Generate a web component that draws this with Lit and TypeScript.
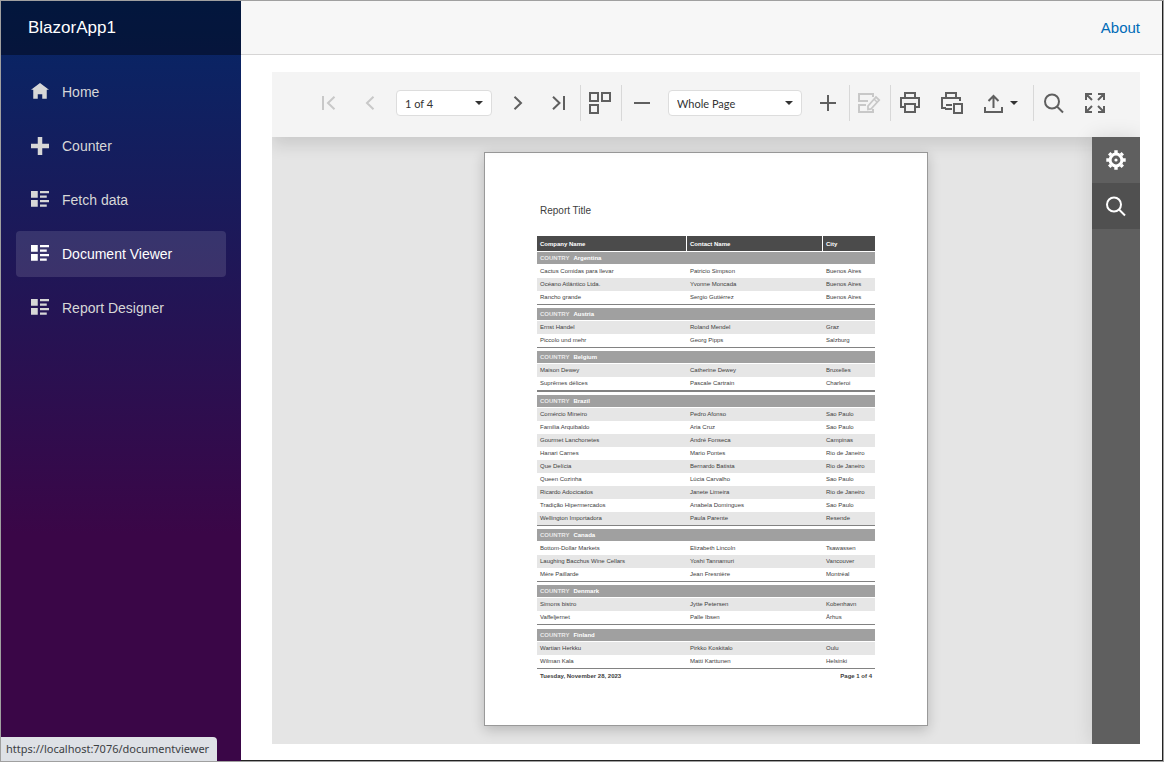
import { LitElement, html, svg, css } from "lit";
import { customElement, state } from "lit/decorators.js";

type Row = [string, string, string];
interface Group {
  country: string;
  shaded: boolean;
  end?: string;
  rows: Row[];
}

// `shaded` tells whether the first row of the group carries the band colour.
const GROUPS: Group[] = [
  {
    country: "Argentina",
    shaded: false,
    rows: [
      ["Cactus Comidas para llevar", "Patricio Simpson", "Buenos Aires"],
      ["Océano Atlántico Ltda.", "Yvonne Moncada", "Buenos Aires"],
      ["Rancho grande", "Sergio Gutiérrez", "Buenos Aires"],
    ],
  },
  {
    country: "Austria",
    shaded: true,
    rows: [
      ["Ernst Handel", "Roland Mendel", "Graz"],
      ["Piccolo und mehr", "Georg Pipps", "Salzburg"],
    ],
  },
  {
    country: "Belgium",
    shaded: true,
    end: "heavy",
    rows: [
      ["Maison Dewey", "Catherine Dewey", "Bruxelles"],
      ["Suprêmes délices", "Pascale Cartrain", "Charleroi"],
    ],
  },
  {
    country: "Brazil",
    shaded: true,
    rows: [
      ["Comércio Mineiro", "Pedro Afonso", "Sao Paulo"],
      ["Familia Arquibaldo", "Aria Cruz", "Sao Paulo"],
      ["Gourmet Lanchonetes", "André Fonseca", "Campinas"],
      ["Hanari Carnes", "Mario Pontes", "Rio de Janeiro"],
      ["Que Delícia", "Bernardo Batista", "Rio de Janeiro"],
      ["Queen Cozinha", "Lúcia Carvalho", "Sao Paulo"],
      ["Ricardo Adocicados", "Janete Limeira", "Rio de Janeiro"],
      ["Tradição Hipermercados", "Anabela Domingues", "Sao Paulo"],
      ["Wellington Importadora", "Paula Parente", "Resende"],
    ],
  },
  {
    country: "Canada",
    shaded: false,
    rows: [
      ["Bottom-Dollar Markets", "Elizabeth Lincoln", "Tsawassen"],
      ["Laughing Bacchus Wine Cellars", "Yoshi Tannamuri", "Vancouver"],
      ["Mère Paillarde", "Jean Fresnière", "Montréal"],
    ],
  },
  {
    country: "Denmark",
    shaded: true,
    end: "loose",
    rows: [
      ["Simons bistro", "Jytte Petersen", "Kobenhavn"],
      ["Vaffeljernet", "Palle Ibsen", "Århus"],
    ],
  },
  {
    country: "Finland",
    shaded: true,
    rows: [
      ["Wartian Herkku", "Pirkko Koskitalo", "Oulu"],
      ["Wilman Kala", "Matti Karttunen", "Helsinki"],
    ],
  },
];

@customElement("report-page")
class ReportPage extends LitElement {
  static styles = css`
    :host {
      display: block;
      box-sizing: border-box;
      width: 444px;
      padding: 52px 52px 44px;
      border: 1px solid #999;
      background: #fff;
      box-shadow: 0 4px 12px rgba(0, 0, 0, 0.2);
      font: 6px/13px "Liberation Sans", Arial, sans-serif;
      color: #404040;
    }
    .title {
      margin: 0 0 19px;
      padding: 0 3px;
      font-size: 10px;
      line-height: 12px;
      font-weight: 400;
    }
    table {
      width: 338px;
      border-collapse: separate;
      border-spacing: 0;
      table-layout: fixed;
    }
    .c1 {
      width: 149px;
    }
    .c2 {
      width: 136px;
    }
    th,
    td {
      padding: 0 3px;
      text-align: left;
      white-space: nowrap;
    }
    .head th {
      height: 14px;
      padding-top: 1px;
      line-height: 14px;
      background: #4b4b4b;
      color: #fff;
      border-bottom: 1px solid #fff;
    }
    .head th + th {
      border-left: 1px solid #fff;
    }
    .band th {
      height: 12px;
      line-height: 12px;
      background: #a0a0a0;
      border-bottom: 1px solid #fff;
      color: #fff;
    }
    .label {
      margin-right: 4px;
      color: #e8e8e8;
    }
    td {
      height: 13px;
    }
    td + td {
      padding-left: 4px;
    }
    .shade td {
      background: #e6e6e6;
    }
    .rule td {
      height: 3px;
      border-top: 1px solid #828282;
    }
    .rule.heavy td {
      border-top-width: 2px;
    }
    .rule.loose td {
      height: 4px;
    }
    .foot {
      display: flex;
      justify-content: space-between;
      padding: 0 3px;
      line-height: 9px;
      font-weight: 700;
    }
  `;

  render() {
    return html`
      <h1 class="title">Report Title</h1>
      <table>
        <colgroup>
          <col class="c1" />
          <col class="c2" />
          <col />
        </colgroup>
        <thead>
          <tr class="head">
            <th scope="col">Company Name</th>
            <th scope="col">Contact Name</th>
            <th scope="col">City</th>
          </tr>
        </thead>
        ${GROUPS.map(
          (g) => html`<tbody>
            <tr class="band">
              <th colspan="3" scope="rowgroup"><span class="label">COUNTRY</span>${g.country}</th>
            </tr>
            ${g.rows.map(
              (r, i) => html`<tr class=${(i % 2 === 0) === g.shaded ? "shade" : "plain"}>
                ${r.map((c) => html`<td>${c}</td>`)}
              </tr>`
            )}
            <tr class="rule ${g.end ?? ""}"><td colspan="3"></td></tr>
          </tbody>`
        )}
      </table>
      <div class="foot"><span>Tuesday, November 28, 2023</span><span>Page 1 of 4</span></div>
    `;
  }
}

const ICONS = {
  first: svg`<path d="M6 5v14M17.500 5.800 11 12l6.500 6.200"/>`,
  prev: svg`<path d="M15.500 5.800 9 12l6.500 6.200"/>`,
  next: svg`<path d="M8.500 5.800 15 12l-6.500 6.200"/>`,
  last: svg`<path d="M6 5.800 12.500 12 6 18.200M17 5v14"/>`,
  multi: svg`<path d="M1 2h8v8H1zM13 2h8v8h-8zM1 14h8v8H1z"/>`,
  minus: svg`<path d="M4 12h16"/>`,
  plus: svg`<path d="M4 12h16M12 4v16"/>`,
  edit: svg`<path d="M15 6V3H1v7h9M8 14H1v7h14v-3"/><path d="M10 18.500v-3.500L18 6l3.200 3L13 18z" stroke-width="1.800"/><path d="m16 8 3 3" stroke-width="1.500"/>`,
  print: svg`<path d="M6 7V2h10v5M5 16H2V7h18v9h-3M6 13h10v8H6z"/>`,
  printPage: svg`<path d="M6 7V2h10v5M6 17H2V7h18v3M12 14H6M12 18H5M14 13h8v9h-8z"/>`,
  exportTo: svg`<path d="M4 16v5h17v-5M12.500 17V5M7.500 10l5-5 5 5"/>`,
  search: svg`<circle cx="10" cy="10.500" r="7"/><path d="m15 15.500 6 6"/>`,
  full: svg`<path d="M3 9V3h6M3 3l6 6M15 3h6v6M21 3l-6 6M3 15v6h6M3 21l6-6M21 15v6h-6M21 21l-6-6"/>`,
  gear: svg`<circle cx="12" cy="12" r="5.900" stroke-width="3"/><circle cx="12" cy="12" r="1.600" fill="currentColor" stroke="none"/><path stroke-width="3.400" d="M12 5V2.300M12 19v2.700M5 12H2.300M19 12h2.700M7.050 7.050 5.200 5.200M16.950 16.950l1.850 1.850M16.950 7.050l1.850-1.850M7.050 16.950 5.200 18.800"/>`,
};

const icon = (name: keyof typeof ICONS) => html`<svg
  class="icon"
  viewBox="0 0 24 24"
  aria-hidden="true"
>${ICONS[name]}</svg>`;

const caret = html`<svg class="caret" viewBox="0 0 8 4" aria-hidden="true"><path d="M0 0h8L4 4z" /></svg>`;

@customElement("document-viewer")
class DocumentViewer extends LitElement {
  static styles = css`
    :host {
      display: flex;
      flex-direction: column;
      min-height: 0;
      background: #e5e5e5;
      overflow: hidden;
    }
    button {
      display: flex;
      align-items: center;
      justify-content: center;
      flex: none;
      padding: 0;
      border: 0;
      background: none;
      color: #5f5f5f;
    }
    button:disabled {
      color: #c8c8c8;
    }
    .icon {
      flex: none;
      width: 24px;
      height: 24px;
      overflow: visible;
      fill: none;
      stroke: currentColor;
      stroke-width: 2;
    }
    .toolbar {
      position: relative;
      z-index: 2;
      display: flex;
      flex: none;
      align-items: center;
      justify-content: center;
      height: 65px;
      padding: 0 0 3px 12px;
      box-sizing: border-box;
      background: #f4f4f4;
      box-shadow: 0 8px 16px rgba(0, 0, 0, 0.12);
    }
    .group {
      display: flex;
      align-items: center;
      gap: 1px;
      height: 36px;
    }
    .group + .group {
      border-left: 1px solid #d8d8d8;
    }
    .wide {
      padding-right: 1px;
    }
    .group button {
      width: 40px;
      height: 36px;
    }
    .group .menu {
      width: 60px;
      gap: 5px;
      padding-left: 8px;
      justify-content: flex-start;
    }
    .caret {
      width: 8px;
      height: 4px;
      fill: #333;
    }
    .field {
      position: relative;
      margin: 0 5px;
    }
    .field .caret {
      position: absolute;
      right: 9px;
      top: 11px;
      pointer-events: none;
    }
    select {
      appearance: none;
      display: block;
      box-sizing: border-box;
      height: 26px;
      padding: 0 20px 0 8px;
      border: 1px solid #ddd;
      border-radius: 4px;
      background: #fff;
      color: #333;
      font: 11px Lato, "Open Sans", sans-serif;
    }
    .pages {
      width: 96px;
    }
    .zoom {
      width: 134px;
    }
    .body {
      display: flex;
      flex: 1;
      min-height: 0;
    }
    .canvas {
      display: flex;
      flex: 1;
      justify-content: center;
      align-items: flex-start;
      padding: 15px 0 18px 48px;
    }
    .side {
      flex: none;
      width: 48px;
      z-index: 3;
      background: #5f5f5f;
      box-shadow: 0 0 20px rgba(0, 0, 0, 0.12);
    }
    .side button {
      width: 48px;
      height: 46px;
      color: #fff;
    }
    .side .find {
      background: #505050;
    }
  `;

  render() {
    return html`
      <div class="toolbar" role="toolbar">
        <div class="group wide">
          <button disabled aria-label="First page">${icon("first")}</button>
          <button disabled aria-label="Previous page">${icon("prev")}</button>
          <div class="field">
            <select class="pages" aria-label="Page">
              <option>1 of 4</option>
              <option>2 of 4</option>
              <option>3 of 4</option>
              <option>4 of 4</option>
            </select>
            ${caret}
          </div>
          <button aria-label="Next page">${icon("next")}</button>
          <button aria-label="Last page">${icon("last")}</button>
        </div>
        <div class="group"><button aria-label="Multipage mode">${icon("multi")}</button></div>
        <div class="group wide">
          <button aria-label="Zoom out">${icon("minus")}</button>
          <div class="field">
            <select class="zoom" aria-label="Zoom">
              <option>Whole Page</option>
              <option>Page Width</option>
              <option>100%</option>
            </select>
            ${caret}
          </div>
          <button aria-label="Zoom in">${icon("plus")}</button>
        </div>
        <div class="group"><button disabled aria-label="Edit fields">${icon("edit")}</button></div>
        <div class="group">
          <button aria-label="Print">${icon("print")}</button>
          <button aria-label="Print page">${icon("printPage")}</button>
          <button class="menu" aria-label="Export to">${icon("exportTo")}${caret}</button>
        </div>
        <div class="group">
          <button aria-label="Search">${icon("search")}</button>
          <button aria-label="Full screen">${icon("full")}</button>
        </div>
      </div>
      <div class="body">
        <div class="canvas"><report-page></report-page></div>
        <aside class="side">
          <button aria-label="Options">${icon("gear")}</button>
          <button class="find" aria-label="Find">${icon("search")}</button>
        </aside>
      </div>
    `;
  }
}

const NAV_ICONS = {
  home: "M4 0l-4 3h1v4h2v-2h2v2h2v-4.030l1 .030-4-3z",
  plus: "M3 0v3h-3v2h3v3h2v-3h3v-2h-3v-3h-2z",
  list: "M0 0v3h3v-3h-3zm4 0v1h4v-1h-4zm0 2v1h3v-1h-3zm-4 2v3h3v-3h-3zm4 0v1h4v-1h-4zm0 2v1h3v-1h-3z",
};

const NAV: { label: string; href: string; glyph: keyof typeof NAV_ICONS }[] = [
  { label: "Home", href: "#home", glyph: "home" },
  { label: "Counter", href: "#counter", glyph: "plus" },
  { label: "Fetch data", href: "#fetchdata", glyph: "list" },
  { label: "Document Viewer", href: "#documentviewer", glyph: "list" },
  { label: "Report Designer", href: "#reportdesigner", glyph: "list" },
];

@customElement("app-root")
class AppRoot extends LitElement {
  @state() private active = "Document Viewer";

  static styles = css`
    :host {
      position: relative;
      display: flex;
      box-sizing: border-box;
      height: 100vh;
      border: 1px solid #a0a0a0;
      background: #fff;
      font-family: "Liberation Sans", Arial, sans-serif;
    }
    .sidebar {
      flex: none;
      width: 240px;
      background: linear-gradient(180deg, rgb(5, 39, 103) 0%, #3a0647 70%);
    }
    .brand {
      display: flex;
      align-items: center;
      height: 54px;
      padding-left: 27px;
      background: rgba(0, 0, 0, 0.4);
    }
    .brand a {
      color: #fff;
      font-size: 17px;
      text-decoration: none;
    }
    .nav {
      display: flex;
      flex-direction: column;
      gap: 8px;
      padding: 14px 15px;
    }
    .item {
      display: flex;
      align-items: center;
      gap: 13px;
      height: 46px;
      padding-left: 15px;
      border-radius: 4px;
      color: #d7d7d7;
      font-size: 14px;
      text-decoration: none;
    }
    .item.active {
      background: rgba(255, 255, 255, 0.12);
      color: #fff;
    }
    .glyph {
      width: 18px;
      height: 18px;
      fill: currentColor;
    }
    .main {
      display: flex;
      flex: 1;
      flex-direction: column;
      min-width: 0;
      border-right: 1px solid #222;
      border-bottom: 1px solid #222;
    }
    .top {
      display: flex;
      flex: none;
      align-items: center;
      justify-content: flex-end;
      height: 53px;
      padding-right: 22px;
      border-bottom: 1px solid #d6d5d5;
      background: #f7f7f7;
    }
    .top a {
      color: #006bb7;
      font-size: 15px;
      text-decoration: none;
    }
    .content {
      display: flex;
      flex: 1;
      flex-direction: column;
      min-height: 0;
      padding: 17px 22px 16px 31px;
    }
    .content document-viewer {
      flex: 1;
    }
    .status {
      position: absolute;
      left: 0;
      bottom: 0;
      padding: 0 8px 0 5px;
      border-radius: 0 4px 0 0;
      background: #dee1e6;
      color: #3c4043;
      font: 11px/24px "Noto Sans", "Open Sans", sans-serif;
    }
  `;

  render() {
    return html`
      <div class="sidebar">
        <div class="brand"><a href="#home">BlazorApp1</a></div>
        <nav class="nav">
          ${NAV.map(
            (n) => html`<a
              class="item ${n.label === this.active ? "active" : ""}"
              href=${n.href}
              @click=${() => (this.active = n.label)}
              ><svg class="glyph" viewBox="0 0 8 8" aria-hidden="true"><path d=${NAV_ICONS[n.glyph]} /></svg
              ><span>${n.label}</span></a
            >`
          )}
        </nav>
      </div>
      <main class="main">
        <div class="top"><a href="#about">About</a></div>
        <div class="content"><document-viewer></document-viewer></div>
      </main>
      <div class="status">https://localhost:7076/documentviewer</div>
    `;
  }
}
